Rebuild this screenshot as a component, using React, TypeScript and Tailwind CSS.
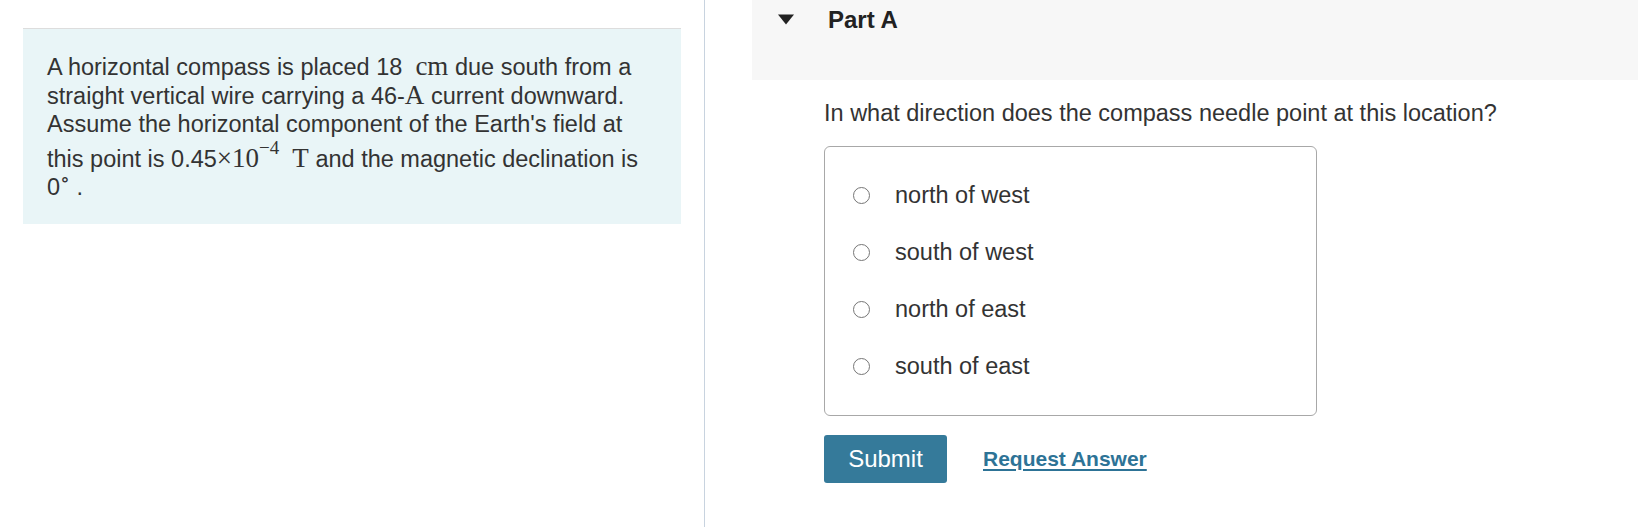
const serif = "font-['Liberation_Serif','DejaVu_Serif',serif]";

function Math({ children }: { children: React.ReactNode }) {
  return <span className={`${serif} text-[27px]`}>{children}</span>;
}

function Option({ label }: { label: string }) {
  return (
    <label className="flex h-[57px] items-center">
      <span className="ml-[28px] h-[17px] w-[17px] shrink-0 rounded-full border-[1.5px] border-[#767676] bg-white" />
      <span className="ml-[25px]">{label}</span>
    </label>
  );
}

export default function App() {
  const options = ['north of west', 'south of west', 'north of east', 'south of east'];
  return (
    <div className="flex h-[530px] w-[1638px] bg-white font-['Liberation_Sans',Arial,sans-serif] text-[23.5px] text-[#333]">
      {/* problem statement */}
      <div className="h-[527px] w-[705px] shrink-0 border-r border-[#c8d3df] pl-[23px] pt-[28px]">
        <div className="w-[658px] border-t border-[#dddddd] bg-[#e9f5f7] px-[24px] pb-[23px] pt-[23px] leading-[28px]">
          <p>
            A horizontal compass is placed 18&nbsp; <Math>cm</Math> due south from a straight vertical wire carrying a
            46-<Math>A</Math> current downward. Assume the horizontal component of the Earth's field at this point is{' '}
            <span className="inline-block pt-[6px]">
              0.45<Math>×10</Math>
              <sup className={`${serif} top-[-0.7em] text-[19px]`}>−4</sup>
              &nbsp;&nbsp;<Math>T</Math>
            </span>{' '}
            and the magnetic declination is 0<sup className={`${serif} top-[-0.45em] text-[20px]`}>∘</sup> .
          </p>
        </div>
      </div>

      {/* part A */}
      <div className="flex-1 pl-[47px]">
        <div className="flex h-[80px] items-start bg-[#f7f7f7]">
          <svg className="ml-[25px] mt-[14px]" width="18" height="11" viewBox="0 0 18 11">
            <polygon points="1,0.5 17,0.5 9,10.5" fill="#222" />
          </svg>
          <h2 className="ml-[33px] mt-[5px] text-[24px] font-bold leading-[30px] text-[#222]">Part A</h2>
        </div>
        <div className="pl-[72px]">
          <p className="mt-[19px] leading-[28px]">In what direction does the compass needle point at this location?</p>
          <div className="mt-[19px] w-[493px] rounded-[6px] border border-[#a8a8a8] py-[20px]">
            {options.map((o) => (
              <Option key={o} label={o} />
            ))}
          </div>
          <div className="mt-[19px] flex items-center">
            <button className="h-[48px] w-[123px] rounded-[3px] bg-[#357a9a] text-[24px] text-white">Submit</button>
            <a className="ml-[36px] text-[21px] font-bold text-[#2d7396] underline decoration-2 underline-offset-[3px]" href="#">
              Request Answer
            </a>
          </div>
        </div>
      </div>
    </div>
  );
}
